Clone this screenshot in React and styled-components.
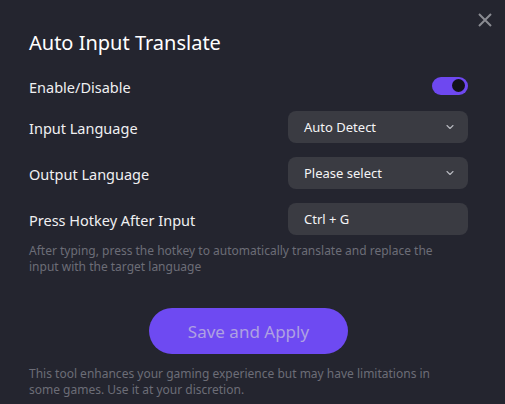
import React, { useState } from 'react'
import styled, { createGlobalStyle } from 'styled-components'

const Global = createGlobalStyle`
  html, body {
    margin: 0;
    padding: 0;
    background: #24252f;
  }
  * { box-sizing: border-box; }
`

const Chevron = () => (
  <svg width="10" height="10" viewBox="0 0 10 10" fill="none">
    <path d="M2 3.5 L5 6.5 L8 3.5" stroke="#b8b9c0" strokeWidth="1.1" strokeLinecap="round" strokeLinejoin="round" />
  </svg>
)

const App = () => {
  const [enabled, setEnabled] = useState(true)
  return (
    <Panel>
      <Global />
      <Close aria-label="close">
        <svg width="16" height="16" viewBox="0 0 16 16">
          <path d="M2 2 L14 14 M14 2 L2 14" stroke="#8a8b92" strokeWidth="2" />
        </svg>
      </Close>
      <Title>Auto Input Translate</Title>
      <Rows>
        <Row>
          <Label>Enable/Disable</Label>
          <Toggle $on={enabled} onClick={() => setEnabled(!enabled)}>
            <Knob />
          </Toggle>
        </Row>
        <Row>
          <Label>Input Language</Label>
          <Field>
            Auto Detect
            <Chevron />
          </Field>
        </Row>
        <Row>
          <Label>Output Language</Label>
          <Field>
            Please select
            <Chevron />
          </Field>
        </Row>
        <Row>
          <Label>Press Hotkey After Input</Label>
          <Field>Ctrl + G</Field>
        </Row>
      </Rows>
      <Hint>
        After typing, press the hotkey to automatically translate and replace the input with the target language
      </Hint>
      <ButtonRow>
        <SaveButton>Save and Apply</SaveButton>
      </ButtonRow>
      <Note>
        This tool enhances your gaming experience but may have limitations in some games. Use it at your discretion.
      </Note>
    </Panel>
  )
}

export default App

const Panel = styled.div`
  position: relative;
  width: 505px;
  height: 404px;
  background: #24252f;
  padding: 30px 37px 0 29px;
  font-family: "Noto Sans", "Open Sans", sans-serif;
  color: #f2f2f4;
`

const Close = styled.div`
  position: absolute;
  top: 12px;
  right: 12px;
  width: 16px;
  height: 16px;
  display: flex;
`

const Title = styled.h1`
  margin: 0;
  font-size: 20px;
  font-weight: 400;
  line-height: 26px;
  color: #ffffff;
`

const Rows = styled.div`
  margin-top: 20px;
  display: flex;
  flex-direction: column;
  gap: 14px;
`

const Row = styled.div`
  display: flex;
  align-items: center;
  justify-content: space-between;
  min-height: 18px;
`

const Label = styled.span`
  font-size: 14.5px;
  color: #f0f0f2;
  padding-top: 1px;
`

const Toggle = styled.div`
  width: 36px;
  height: 18px;
  border-radius: 9px;
  background: ${p => (p.$on ? '#6e48f0' : '#4a4b55')};
  display: flex;
  align-items: center;
  justify-content: ${p => (p.$on ? 'flex-end' : 'flex-start')};
  padding: 0 3px;
  margin-bottom: 2px;
`

const Knob = styled.div`
  width: 13px;
  height: 13px;
  border-radius: 50%;
  background: #131318;
`

const Field = styled.div`
  width: 180px;
  height: 32px;
  border-radius: 8px;
  background: #3a3b42;
  display: flex;
  align-items: center;
  justify-content: space-between;
  padding: 0 13px 0 16px;
  font-size: 13px;
  color: #f4f4f6;
`

const Hint = styled.p`
  margin: 8px 0 0;
  font-size: 12px;
  line-height: 16px;
  color: #6c6d77;
  max-width: 430px;
`

const ButtonRow = styled.div`
  display: flex;
  justify-content: center;
  margin-top: 33px;
`

const SaveButton = styled.button`
  width: 199px;
  height: 46px;
  border: none;
  border-radius: 23px;
  background: #6e4af2;
  color: #aea1e2;
  font-family: "Noto Sans", "Open Sans", sans-serif;
  font-size: 17px;
`

const Note = styled.p`
  margin: 12px 0 0;
  font-size: 12px;
  line-height: 16px;
  color: #6c6d77;
  max-width: 420px;
`
